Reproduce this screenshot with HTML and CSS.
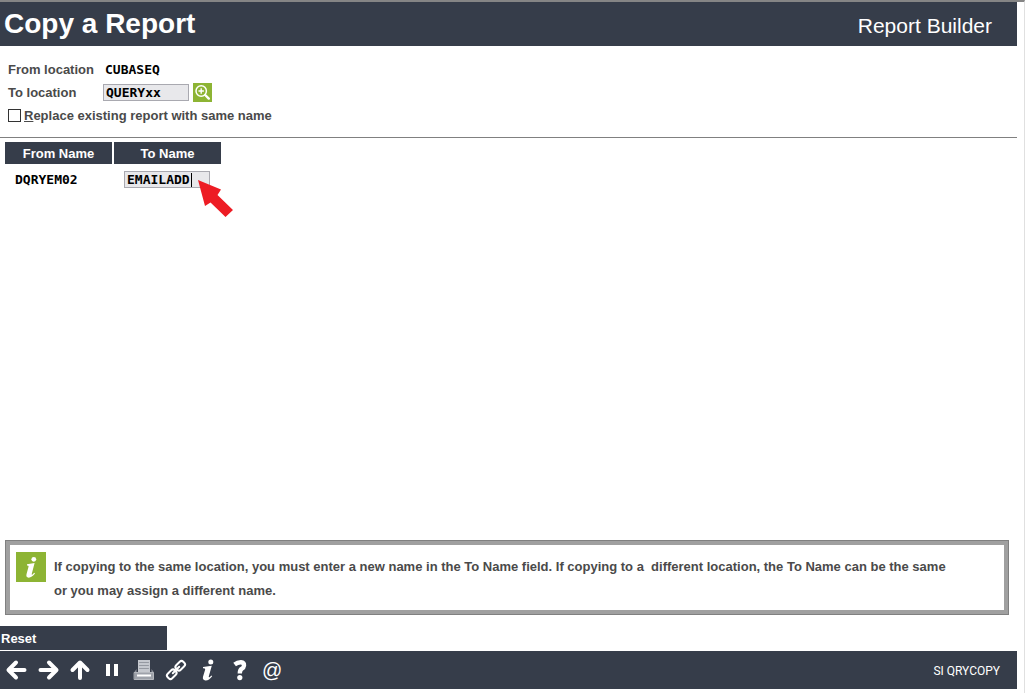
FILE: index.html
```html
<!DOCTYPE html>
<html lang="en">
<head>
<meta charset="utf-8">
<title>Copy a Report</title>
<link rel="stylesheet" href="styles.css">
</head>
<body>
<div class="window">
  <header class="titlebar">
    <h1 class="title">Copy a Report</h1>
    <span class="product">Report Builder</span>
  </header>

  <main class="content">
    <form class="options">
      <div class="row">
        <span class="row-label">From location</span>
        <span class="value">CUBASEQ</span>
      </div>
      <div class="row">
        <label class="row-label" for="to-location">To location</label>
        <input class="field" id="to-location" type="text" value="QUERYxx">
        <button class="lookup" type="button" aria-label="Look up location">
          <svg viewBox="0 0 19 19" width="19" height="19" fill="none" stroke="#fff">
            <circle cx="8.2" cy="8" r="5.2" stroke-width="1.5"/>
            <path d="M5.5 8h5.4M8.2 5.3v5.4" stroke-width="1.4"/>
            <path d="M12.2 12l3.6 3.6" stroke-width="2.4" stroke-linecap="round"/>
          </svg>
        </button>
      </div>
      <div class="row">
        <input class="check" id="replace" type="checkbox">
        <label for="replace"><u>R</u>eplace existing report with same name</label>
      </div>
    </form>

    <table class="names">
      <thead>
        <tr><th>From Name</th><th id="to-name">To Name</th></tr>
      </thead>
      <tbody>
        <tr>
          <td class="value">DQRYEM02</td>
          <td>
            <div class="entry">
              <input class="field" type="text" value="EMAILADD" aria-labelledby="to-name">
              <span class="caret"></span>
              <svg class="pointer" viewBox="0 0 36 38" width="36" height="38">
                <path d="M1 1L24 10.5L20.5 16L36 31L28.5 38L13.5 23.5L8 27Z" fill="#ed1c24"/>
              </svg>
            </div>
          </td>
        </tr>
      </tbody>
    </table>
  </main>

  <aside class="notice">
    <svg class="notice-icon" viewBox="0 0 30 30" width="30" height="30" fill="#fff">
      <rect width="30" height="30" fill="#8db434"/>
      <circle cx="17.8" cy="7.3" r="2.4"/>
      <path d="M11 12.2L18.6 11.1L15.8 21.8Q15.5 23.3 16.5 22.6L18.2 20.8L19 21.6Q15.8 25.8 12.6 25.7Q9.8 25.4 10.5 22.3L12.6 14.5Q12.8 13.3 11 13.4Z"/>
    </svg>
    <p class="notice-text">If copying to the same location, you must enter a new name in the To Name field. If copying to a &nbsp;different location, the To Name can be the same or you may assign a different name.</p>
  </aside>

  <button class="reset" type="button">Reset</button>

  <footer class="toolbar">
    <nav class="tools">
      <button class="tool" type="button" aria-label="Back">
        <svg viewBox="0 0 20 20" width="20" height="20"><path d="M18.5 10H3M10 2.5L2.5 10L10 17.5"/></svg>
      </button>
      <button class="tool" type="button" aria-label="Forward">
        <svg viewBox="0 0 20 20" width="20" height="20"><path d="M2.5 10h15M11 2.5L18.5 10L11 17.5"/></svg>
      </button>
      <button class="tool" type="button" aria-label="Up">
        <svg viewBox="0 0 20 20" width="20" height="20"><path d="M10 18V3M2.5 10L10 2.5L17.5 10"/></svg>
      </button>
      <button class="tool" type="button" aria-label="Pause">
        <svg class="solid" viewBox="0 0 20 20" width="20" height="20"><path d="M4 4h4v12H4zM12 4h4v12h-4z"/></svg>
      </button>
      <button class="tool" type="button" aria-label="Print">
        <svg viewBox="0 0 20 20" width="20" height="20">
          <rect x="4" y="0" width="12" height="12" fill="#c5c8ce" stroke="none"/>
          <path d="M5.5 2.5h9M5.5 5.5h9M5.5 8.5h9" stroke="#9599a1" stroke-width="1"/>
          <path d="M0 12.5L2.5 9V12H17.5V9L20 12.5Z" fill="#8b9099" stroke="none"/>
          <rect x="0.5" y="12.5" width="19" height="7" fill="#9ea2aa" stroke="#b4b7bd" stroke-width="1"/>
          <rect x="3" y="14.5" width="14" height="2" fill="#fff" stroke="none"/>
        </svg>
      </button>
      <button class="tool" type="button" aria-label="Link">
        <svg class="thin" viewBox="0 0 20 20" width="20" height="20">
          <g transform="rotate(-45 10 10)">
            <rect x="-1" y="6.8" width="10" height="6.4" rx="2.5"/>
            <rect x="11" y="6.8" width="10" height="6.4" rx="2.5"/>
            <path d="M5.5 10h9"/>
          </g>
        </svg>
      </button>
      <button class="tool" type="button" aria-label="Information">
        <svg class="solid" viewBox="0 0 20 20" width="20" height="20">
          <circle cx="12.8" cy="2" r="2.5"/>
          <path d="M5 7L13.8 5.8L10.8 16.2Q10.5 17.8 11.6 17.2L13.4 15.4L14.2 16.2Q10.8 20.7 7.4 20.4Q4.2 20 5 16.8L7.2 9.5Q7.4 8.2 5 8.3Z"/>
        </svg>
      </button>
      <button class="tool" type="button" aria-label="Help">
        <svg viewBox="0 0 20 20" width="20" height="20">
          <path d="M4.6 4.4Q7.5 2.2 11 2.3Q14.2 2.6 14 5.6Q13.8 7.7 11.8 8.7Q9.8 9.8 9.8 13.4" stroke-width="4.4" stroke-linecap="butt"/>
          <circle class="solid" cx="9.8" cy="17.6" r="2.6"/>
        </svg>
      </button>
      <button class="tool at" type="button" aria-label="Mail">@</button>
    </nav>
    <span class="screen-id">SI QRYCOPY</span>
  </footer>
</div>
</body>
</html>
```
FILE: styles.css
```css
* {
  box-sizing: border-box;
}

body {
  margin: 0;
  background: #fff;
  color: #4a4a4a;
  font: bold 13px/16px "Liberation Sans", Arial, sans-serif;
}

button {
  margin: 0;
  padding: 0;
  border: 0;
  background: none;
  color: inherit;
  font: inherit;
}

svg {
  display: block;
}

.window {
  display: flex;
  flex-direction: column;
  min-height: 100vh;
  padding: 0 7px 4px 0;
  border-top: 2px solid #858585;
  border-right: 1px solid #e0e0e0;
}

.titlebar {
  display: flex;
  justify-content: space-between;
  align-items: center;
  height: 44px;
  padding: 0 25px 0 4px;
  background: #363d4a;
  color: #fff;
}

.title {
  margin: 0;
  font-size: 28px;
  line-height: 44px;
}

.product {
  padding-top: 4px;
  font-size: 21px;
  font-weight: normal;
  line-height: 24px;
}

.content {
  flex: 1;
}

.options {
  padding: 12px 8px 10px;
  border-bottom: 1px solid #808080;
}

.row {
  display: flex;
  align-items: center;
  height: 23px;
}

.row-label {
  width: 95px;
}

.value,
.field {
  color: #000;
  font: bold 13px/16px "DejaVu Sans Mono", monospace;
}

.row .value {
  padding-left: 2px;
}

.field {
  width: 86px;
  height: 17px;
  padding: 0 2px;
  border: 1px solid #a9a9b0;
  border-radius: 0;
  background: #e8e8eb;
  outline: none;
}

.lookup {
  width: 19px;
  height: 19px;
  margin-left: 4px;
  background: #8db434;
}

.check {
  appearance: none;
  width: 13px;
  height: 13px;
  margin: 0 3px 0 0;
  border: 1px solid #333;
  background: #fff;
}

.check:checked {
  background: #363d4a;
}

.names {
  margin: 2px 0 0 3px;
  border-spacing: 2px;
}

.names th {
  width: 107px;
  height: 22px;
  padding: 2px 0 0;
  background: #363d4a;
  color: #fff;
}

.names td {
  padding: 5px 10px;
}

.entry {
  position: relative;
  display: flex;
  width: 86px;
}

.caret {
  position: absolute;
  top: 2px;
  left: 67px;
  width: 1px;
  height: 14px;
  background: #000;
}

.pointer {
  position: absolute;
  top: 8px;
  left: 73px;
}

.notice {
  display: flex;
  gap: 8px;
  margin: 0 8px 11px 5px;
  padding: 7px 48px 2px 6px;
  border: 5px solid #a0a0a0;
  outline: 1px solid #808080;
  outline-offset: -1px;
}

.notice-icon {
  flex: none;
}

.notice-text {
  margin: 3px 0 5px;
  line-height: 24px;
}

.reset {
  width: 167px;
  height: 24px;
  margin-bottom: 1px;
  padding: 2px 0 0 1px;
  background: #363d4a;
  color: #fff;
  text-align: left;
}

.toolbar {
  display: flex;
  justify-content: space-between;
  align-items: center;
  height: 38px;
  padding: 0 17px 0 6px;
  background: #363d4a;
  color: #fff;
}

.tools {
  display: flex;
  gap: 12px;
}

.tool svg {
  overflow: visible;
  fill: none;
  stroke: #fff;
  stroke-width: 4;
  stroke-linecap: round;
  stroke-linejoin: round;
}

.tool .thin {
  stroke-width: 2;
}

.tool .solid,
.tool svg.solid {
  fill: #fff;
  stroke: none;
}

.at {
  font-size: 20px;
  font-weight: normal;
  line-height: 20px;
}

.screen-id {
  padding-top: 2px;
  font: 12px/16px Roboto, sans-serif;
}
```
